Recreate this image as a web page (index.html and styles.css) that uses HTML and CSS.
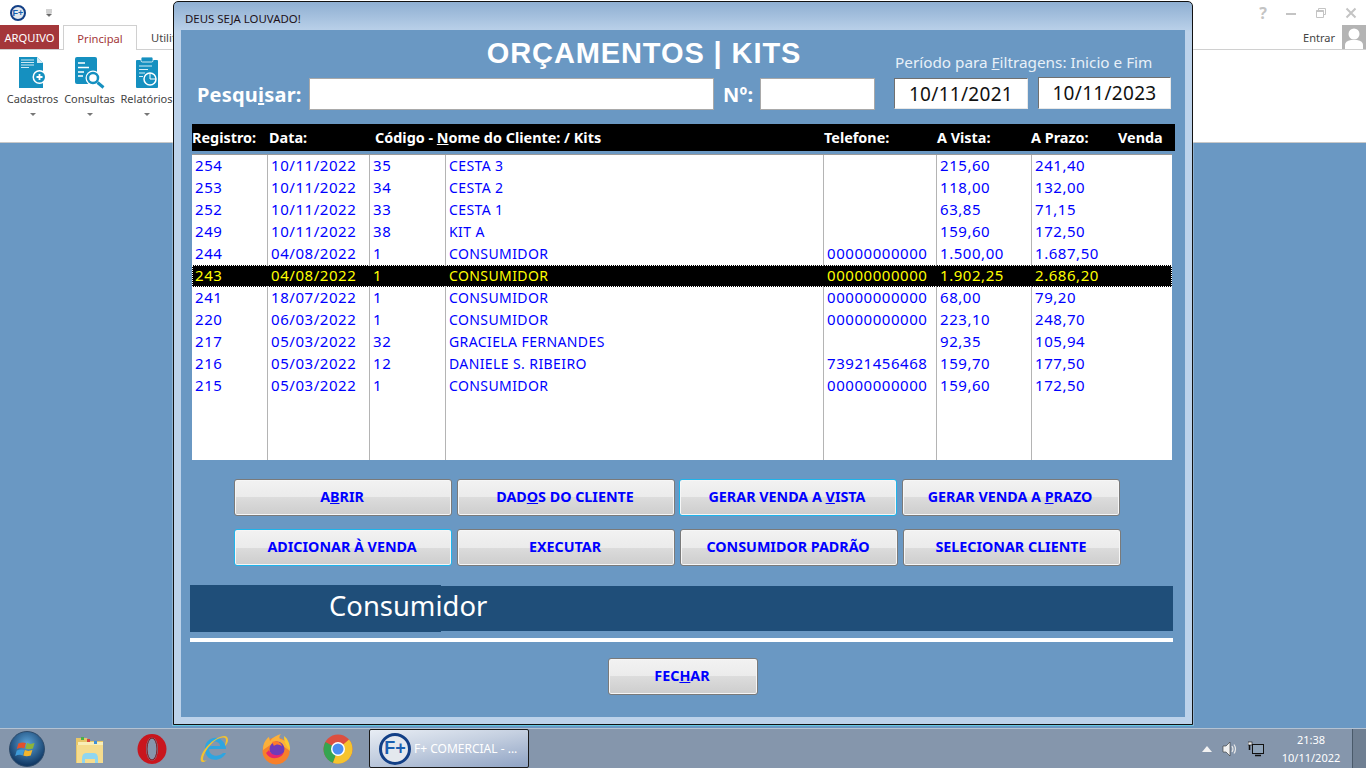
FILE: index.html
```html
<!DOCTYPE html>
<html lang="pt-BR">
<head>
    <meta charset="UTF-8">
    <title>F+ Comercial</title>
    <link rel="stylesheet" href="styles.css">
</head>
<body>
    <div class="desktop">
        <header class="ribbon">
            <div class="quick-bar">
                <span class="app-logo">F+</span>
                <svg class="quick-arrow" width="8" height="8" viewBox="0 0 8 8"><path d="M1 1h6M1 3h6M1.500 5h5L4 7.500z" fill="#666" stroke="#666" stroke-width=".6"/></svg>
                <div class="win-controls">
                    <span class="help">?</span>
                    <svg width="12" height="12" viewBox="0 0 12 12"><path d="M1 7h10" stroke="#c4c4c4" stroke-width="2"/></svg>
                    <svg width="12" height="12" viewBox="0 0 12 12"><path d="M3.500 3.500V1.500h7v6h-2M1.500 3.500h7v7h-7z" fill="none" stroke="#c4c4c4" stroke-width="1"/><path d="M1.500 4h7" stroke="#c4c4c4" stroke-width="2"/></svg>
                    <svg width="12" height="12" viewBox="0 0 12 12"><path d="M1.500 1.500l9 9M10.500 1.500l-9 9" stroke="#c4c4c4" stroke-width="2"/></svg>
                </div>
            </div>
            <div class="tabs">
                <div class="tab-file">ARQUIVO</div>
                <div class="tab-active">Principal</div>
                <div class="tab">Utilitários</div>
                <div class="account">
                    <span>Entrar</span>
                    <svg class="avatar" width="24" height="24" viewBox="0 0 24 24"><rect width="24" height="24" fill="#b4b4b4"/><circle cx="12" cy="9" r="5.500" fill="#fff"/><path d="M3 24v-4q0-4 6-5h6q6 1 6 5v4z" fill="#fff"/></svg>
                </div>
            </div>
            <div class="ribbon-tools">
                <div class="tool">
                    <svg width="30" height="33" viewBox="0 0 30 33"><path d="M1 1h18l6 6v25H1z" fill="#1590c0"/><path d="M19 1v6h6z" fill="#d5edf6"/><path d="M3 4h13M3 6.500h13M3 9h13M3 11.500h8" stroke="#cfe9f4" stroke-width="1.200"/><circle cx="21.500" cy="21" r="7" fill="#fff"/><circle cx="21.500" cy="21" r="5.500" fill="#1590c0"/><path d="M18.500 21h6M21.500 18v6" stroke="#fff" stroke-width="1.800"/></svg>
                    <span>Cadastros</span>
                    <i class="caret"></i>
                </div>
                <div class="tool">
                    <svg width="32" height="33" viewBox="0 0 32 33"><rect x="1" y="1" width="22" height="27" rx="2" fill="#1590c0"/><path d="M4 7h7M4 11.500h11M4 16h6M4 20h5" stroke="#fff" stroke-width="1.500"/><circle cx="19" cy="22" r="7.500" fill="#fff"/><circle cx="19" cy="22" r="5" fill="none" stroke="#1590c0" stroke-width="2.500"/><path d="M23.500 26.500l6 5" stroke="#1590c0" stroke-width="3"/></svg>
                    <span>Consultas</span>
                    <i class="caret"></i>
                </div>
                <div class="tool">
                    <svg width="24" height="33" viewBox="0 0 24 33"><rect x="1" y="4" width="22" height="28" rx="1" fill="#1590c0"/><rect x="6" y="1" width="12" height="5" rx="1.500" fill="#1590c0" stroke="#fff" stroke-width=".8"/><path d="M4 10h13M4 13.500h9M4 17h6M4 20.500h4" stroke="#d5edf6" stroke-width="1.200"/><circle cx="15" cy="23" r="6" fill="none" stroke="#fff" stroke-width="1.500"/><path d="M15 23v-6M15 23h6" stroke="#fff" stroke-width="1"/></svg>
                    <span>Relatórios</span>
                    <i class="caret"></i>
                </div>
            </div>
        </header>

        <div class="window">
            <div class="window-title">DEUS SEJA LOUVADO!</div>
            <main class="window-body">
                <div class="top-area">
                    <div class="top-left">
                        <h1>ORÇAMENTOS | KITS</h1>
                        <div class="search-row">
                            <label class="search-label">Pesq<span>u</span><u>i</u>sar:</label>
                            <input class="field field-search" type="text">
                            <label class="search-label num-label">Nº:</label>
                            <input class="field field-num" type="text">
                        </div>
                    </div>
                    <div class="top-right">
                        <p class="period">Período para <u>F</u>iltragens: Inicio e Fim</p>
                        <div class="dates">
                            <input class="date" type="text" value="10/11/2021">
                            <input class="date date-end" type="text" value="10/11/2023">
                        </div>
                    </div>
                </div>

                <div class="list-head">
                    <span>Registro:</span>
                    <span>Data:</span>
                    <span>Código - <u>N</u>ome do Cliente: / Kits</span>
                    <span>Telefone:</span>
                    <span>A Vista:</span>
                    <span>A Prazo:</span>
                    <span>Venda</span>
                </div>

                <table class="list">
                    <colgroup>
                        <col class="c-reg"><col class="c-date"><col class="c-code"><col class="c-name"><col class="c-tel"><col class="c-cash"><col>
                    </colgroup>
                    <tr><td>254</td><td>10/11/2022</td><td>35</td><td>CESTA 3</td><td></td><td>215,60</td><td>241,40</td></tr>
                    <tr><td>253</td><td>10/11/2022</td><td>34</td><td>CESTA 2</td><td></td><td>118,00</td><td>132,00</td></tr>
                    <tr><td>252</td><td>10/11/2022</td><td>33</td><td>CESTA 1</td><td></td><td>63,85</td><td>71,15</td></tr>
                    <tr><td>249</td><td>10/11/2022</td><td>38</td><td>KIT A</td><td></td><td>159,60</td><td>172,50</td></tr>
                    <tr><td>244</td><td>04/08/2022</td><td>1</td><td>CONSUMIDOR</td><td>00000000000</td><td>1.500,00</td><td>1.687,50</td></tr>
                    <tr class="selected"><td>243</td><td>04/08/2022</td><td>1</td><td>CONSUMIDOR</td><td>00000000000</td><td>1.902,25</td><td>2.686,20</td></tr>
                    <tr><td>241</td><td>18/07/2022</td><td>1</td><td>CONSUMIDOR</td><td>00000000000</td><td>68,00</td><td>79,20</td></tr>
                    <tr><td>220</td><td>06/03/2022</td><td>1</td><td>CONSUMIDOR</td><td>00000000000</td><td>223,10</td><td>248,70</td></tr>
                    <tr><td>217</td><td>05/03/2022</td><td>32</td><td>GRACIELA FERNANDES</td><td></td><td>92,35</td><td>105,94</td></tr>
                    <tr><td>216</td><td>05/03/2022</td><td>12</td><td>DANIELE S. RIBEIRO</td><td>73921456468</td><td>159,70</td><td>177,50</td></tr>
                    <tr><td>215</td><td>05/03/2022</td><td>1</td><td>CONSUMIDOR</td><td>00000000000</td><td>159,60</td><td>172,50</td></tr>
                    <tr class="filler"><td></td><td></td><td></td><td></td><td></td><td></td><td></td></tr>
                </table>

                <div class="actions actions-first">
                    <button class="btn">A<u>B</u>RIR</button>
                    <button class="btn">DAD<u>O</u>S DO CLIENTE</button>
                    <button class="btn btn-focus btn-nudge">GERAR VENDA A <u>V</u>ISTA</button>
                    <button class="btn">GERAR VENDA A <u>P</u>RAZO</button>
                </div>
                <div class="actions">
                    <button class="btn btn-focus">ADICIONAR À VENDA</button>
                    <button class="btn">EXECUTAR</button>
                    <button class="btn">CONSUMIDOR PADRÃO</button>
                    <button class="btn">SELECIONAR CLIENTE</button>
                </div>

                <div class="client-band">
                    <div class="client-name">Consumidor</div>
                </div>
                <div class="rule"></div>
                <div class="close-row">
                    <button class="btn btn-close">FEC<u>H</u>AR</button>
                </div>
            </main>
        </div>

        <footer class="taskbar">
            <div class="start-orb">
                <svg width="28" height="28" viewBox="0 0 26 26"><path d="M5 8q4-2 7-.500l-1.500 5q-3-1.500-7 .500z" fill="#e2502b"/><path d="M13 7.500q3 1.500 7 0l-1.500 5q-4 1.500-7 0z" fill="#8cb43a"/><path d="M3.500 14.500q4-2 7-.500l-1.500 5q-3-1.500-7 .500z" fill="#3f9bd8"/><path d="M11 14q3 1.500 7 0l-1.500 5q-4 1.500-7 0z" fill="#f3b52c"/></svg>
            </div>
            <div class="task-icon">
                <svg width="32" height="32" viewBox="0 0 32 32"><path d="M2 5h11l2 3h14v22H2z" fill="#e8c768"/><path d="M4 9h25v4H4z" fill="#f9eeb8"/><path d="M3 12h26v18H3z" fill="#f5dc8e"/><path d="M7 4h3v3H7z" fill="#4bb04a"/><path d="M13 6h3v3h-3z" fill="#d9443a"/><path d="M20 8h3v3h-3z" fill="#3f8fd8"/><path d="M8 26q0-6 4-6h8q4 0 4 6v4h-3v-4H11v4H8z" fill="#8fd6f0"/></svg>
            </div>
            <div class="task-icon">
                <svg width="32" height="32" viewBox="0 0 32 32"><ellipse cx="16" cy="16" rx="14.500" ry="15" fill="#c9161e"/><ellipse cx="16" cy="16" rx="6" ry="11.500" fill="#8696ac"/><ellipse cx="16" cy="16" rx="5" ry="11" fill="none" stroke="#7e1216" stroke-width="1"/></svg>
            </div>
            <div class="task-icon">
                <svg width="32" height="32" viewBox="0 0 32 32"><path d="M28 16H11c0 7 9 9 14 4h3c-4 9-20 10-21-3-1-9 8-15 15-11 3 2 6 5 6 10z" fill="#2ea5e0"/><path d="M11 13h11c0-6-10-6-11 0z" fill="#8696ac"/><path d="M3 28C1 22 11 8 22 4c5-2 8-1 8 3 0 2-1 4-3 6 0-2 1-4 1-6 0-3-3-3-6-2C13 8 5 21 5 26c0 2 2 2 4 1-2 2-5 3-6 1z" fill="#f2c230"/></svg>
            </div>
            <div class="task-icon">
                <svg width="32" height="32" viewBox="0 0 32 32"><circle cx="16" cy="18" r="13.500" fill="#f7802a"/><path d="M3 17C3 10 6 6 9 4l1 4c3-4 7-6 11-7-2 2-2 4-1 5 6 1 10 6 10 12L16 8z" fill="#fbb03b"/><path d="M24 3c4 3 6 8 6 14-3-3-6-7-6-14z" fill="#fdc92f"/><circle cx="17" cy="16" r="7.500" fill="#6e3bb8"/><path d="M9 17c2 6 10 7 15 2-2 7-14 9-18 1z" fill="#e8286a"/><path d="M12 9c4-2 9 0 10 4-3-2-6-2-8 0z" fill="#ff7b28"/></svg>
            </div>
            <div class="task-icon">
                <svg width="30" height="30" viewBox="0 0 30 30"><circle cx="15" cy="15" r="14.500" fill="#dd4f3f"/><path d="M15 15L2.500 8A14.500 14.500 0 0 0 10 28.800z" fill="#35a550"/><path d="M15 15L10 28.800A14.500 14.500 0 0 0 29.500 15 14.500 14.500 0 0 0 26 5.500z" fill="#f6c42d"/><path d="M15 8.500h13.500l-6 0z" fill="#dd4f3f"/><circle cx="15" cy="15" r="7" fill="#fff"/><circle cx="15" cy="15" r="5.500" fill="#4b8ef0"/></svg>
            </div>
            <div class="task-active">
                <span class="app-logo app-logo-big">F+</span>
                <span class="task-label">F+ COMERCIAL - ...</span>
            </div>
            <div class="tray">
                <svg width="10" height="6" viewBox="0 0 10 6"><path d="M5 0l5 6H0z" fill="#f2f2f2"/></svg>
                <svg width="16" height="16" viewBox="0 0 16 16"><path d="M1 5h3l4-4v14l-4-4H1z" fill="#f0f0f0" stroke="#333" stroke-width=".6"/><path d="M10 5q2 3 0 6M12 3.500q3 4.500 0 9" fill="none" stroke="#e8e8e8" stroke-width="1.200"/></svg>
                <svg width="16" height="16" viewBox="0 0 16 16"><rect x="4.500" y="3.500" width="11" height="9" fill="#8fa3b8" stroke="#111"/><path d="M7 14.500h6M1.500 1v8" stroke="#111" stroke-width="1.500"/><rect x="0" y="1" width="4" height="3" fill="#eee" stroke="#111" stroke-width=".6"/></svg>
                <div class="clock">
                    <span>21:38</span>
                    <span>10/11/2022</span>
                </div>
            </div>
            <div class="show-desktop"></div>
        </footer>
    </div>
</body>
</html>
```

FILE: styles.css
```css
* {
    margin: 0;
    padding: 0;
    box-sizing: border-box;
}
body {
    font-family: 'Noto Sans', sans-serif;
    overflow: hidden;
}
.desktop {
    width: 1366px;
    height: 768px;
    background-color: #6a98c3;
    position: relative;
    display: flex;
    flex-direction: column;
    justify-content: space-between;
}

/* ribbon behind the window */
.ribbon {
    height: 143px;
    background-color: #fff;
    border-bottom: 1px solid #c8c8c8;
}
.quick-bar {
    height: 25px;
    display: flex;
    align-items: center;
    padding-left: 10px;
}
.app-logo {
    width: 16px;
    height: 16px;
    border-radius: 50%;
    border: 2px solid #123f86;
    background-color: #e4e8ee;
    color: #1a5fb0;
    font-family: 'Liberation Sans', sans-serif;
    font-weight: bold;
    font-size: 9px;
    display: flex;
    align-items: center;
    justify-content: center;
}
.quick-arrow {
    margin-left: 19px;
}
.win-controls {
    margin-left: auto;
    display: flex;
    align-items: center;
    gap: 18px;
    padding-right: 9px;
}
.help {
    color: #c4c4c4;
    font-weight: bold;
    font-size: 16px;
    line-height: 12px;
}
.tabs {
    height: 25px;
    display: flex;
    border-bottom: 1px solid #d0d0d0;
    font-size: 11.200px;
}
.tab-file {
    width: 59px;
    background-color: #a4373a;
    color: #fff;
    line-height: 25px;
    text-align: center;
}
.tab-active {
    width: 74px;
    height: 25px;
    margin-left: 4px;
    border: 1px solid #d0d0d0;
    border-bottom: none;
    background-color: #fff;
    color: #a4373a;
    line-height: 25px;
    text-align: center;
}
.tab {
    margin-left: 14px;
    color: #444;
    line-height: 25px;
}
.account {
    margin-left: auto;
    display: flex;
    align-items: center;
    gap: 7px;
    color: #444;
    font-size: 11px;
}
.ribbon-tools {
    display: flex;
    padding: 6px 0 0 4px;
}
.tool {
    width: 57px;
    display: flex;
    flex-direction: column;
    align-items: center;
    font-size: 11px;
    color: #444;
}
.tool span {
    margin-top: 1px;
    line-height: 18px;
    white-space: nowrap;
}
.caret {
    margin-top: 5px;
    border-left: 3px solid transparent;
    border-right: 3px solid transparent;
    border-top: 3px solid #777;
}

/* modal window */
.window {
    position: absolute;
    left: 173px;
    top: 1px;
    width: 1020px;
    height: 724px;
    border: 1px solid #111;
    border-radius: 5px 5px 0 0;
    outline: 1px solid rgba(255, 255, 255, 0.25);
    box-shadow: 0 1px 0 #2fb3d8;
    background: linear-gradient(180deg, #8fafd2 0, #bcd2ea 30px, #bcd2ea 100%);
    padding: 0 7px 7px 7px;
    display: flex;
    flex-direction: column;
}
.window-title {
    height: 28px;
    line-height: 33px;
    padding-left: 4px;
    font-size: 11.400px;
    color: #201018;
}
.window-body {
    flex-grow: 1;
    background-color: #6a98c3;
    padding: 0 9px;
}
.top-area {
    height: 94px;
    display: flex;
}
.top-left {
    width: 703px;
}
h1 {
    height: 48px;
    line-height: 47px;
    padding-left: 205px;
    text-align: center;
    font-family: 'Liberation Sans', sans-serif;
    font-size: 29px;
    letter-spacing: 0.9px;
    color: #fff;
    white-space: nowrap;
}
.search-row {
    display: flex;
    align-items: center;
}
.search-label {
    padding-left: 7px;
    width: 119px;
    font-size: 20px;
    font-weight: bold;
    color: #fff;
    letter-spacing: 0.2px;
}
.num-label {
    width: 46px;
    padding-left: 9px;
}
.field {
    height: 32px;
    background-color: #fff;
    border: 1px solid #a9a9a9;
}
.field-search {
    width: 405px;
}
.field-num {
    width: 115px;
}
.top-right {
    padding-left: 1px;
}
.period {
    height: 47px;
    padding: 22px 0 0 1px;
    line-height: 20px;
    font-size: 15.300px;
    color: #e8f0f8;
    white-space: nowrap;
}
.dates {
    display: flex;
    gap: 10px;
    align-items: flex-end;
}
.date {
    width: 134px;
    height: 31px;
    border: 1px solid;
    border-color: #707070 #e8e8e8 #e8e8e8 #707070;
    background-color: #fff;
    text-align: center;
    font-family: 'Noto Sans', sans-serif;
    font-size: 19px;
    letter-spacing: 0.3px;
    color: #111;
}
.date-end {
    width: 133px;
    height: 32px;
}

.list-head {
    height: 27px;
    margin-left: 2px;
    width: 983px;
    background-color: #000;
    color: #fff;
    font-size: 14.400px;
    font-weight: bold;
    line-height: 28px;
    display: grid;
    grid-template-columns: 77px 106px 449px 113px 94px 87px 1fr;
    white-space: nowrap;
}
.list {
    width: 980px;
    height: 306px;
    margin: 3px 0 0 2px;
    border-collapse: separate;
    border-spacing: 0;
    table-layout: fixed;
    background-color: #fff;
    border-top: 1px solid #999;
    font-size: 15px;
    line-height: 18px;
    letter-spacing: 0.550px;
    color: #0000ff;
}
.c-reg { width: 75px; }
.c-date { width: 102px; }
.c-code { width: 76px; }
.c-name { width: 378px; }
.c-tel { width: 113px; }
.c-cash { width: 95px; }
.list td {
    height: 22px;
    padding: 0 0 2px 3px;
    border-left: 1px solid #b4b4b4;
    white-space: nowrap;
    overflow: hidden;
}
.list td:first-child {
    border-left: none;
}
.list td:nth-child(4) {
    padding: 1px 0 1px 3px;
    font-size: 14px;
    letter-spacing: 0.400px;
}
.list .selected td {
    background-color: #000;
    color: #ffff00;
    border-left-color: #000;
    border-top: 1px dotted #fff;
    border-bottom: 1px dotted #fff;
}
.list .selected td:first-child {
    border-left: 1px dotted #fff;
    padding-left: 2px;
}
.list .selected td:last-child {
    border-right: 1px dotted #fff;
}
.list .filler td {
    height: auto;
}

.actions {
    margin: 13px 0 0 44px;
    display: flex;
    gap: 5px;
}
.actions-first {
    margin-top: 19px;
}
.btn {
    width: 218px;
    height: 37px;
    padding: 0 2px 3px 0;
    border: 1px solid #7a7a7a;
    border-radius: 3px;
    background: linear-gradient(180deg, #f2f2f2 0, #ebebeb 50%, #dcdcdc 50%, #cdcdcd 100%);
    box-shadow: inset 0 0 0 1px #f6f6f6;
    color: #0000ff;
    font-family: 'Noto Sans', sans-serif;
    font-weight: bold;
    font-size: 14.300px;
}
.btn-focus {
    border-color: #1fb4ea;
}
.btn-nudge {
    margin-left: -1px;
}
.client-band {
    height: 45px;
    margin-top: 20px;
    width: 983px;
    background-color: #1f4e79;
}
.client-name {
    width: 251px;
    height: 47px;
    position: relative;
    top: -1px;
    background-color: #1f4e79;
    color: #fff;
    font-size: 27.400px;
    line-height: 42px;
    padding-left: 139px;
    white-space: nowrap;
}
.rule {
    height: 4px;
    width: 983px;
    margin-top: 7px;
    background-color: #fff;
}
.close-row {
    margin: 16px 0 0 418px;
}
.btn-close {
    width: 150px;
}

/* taskbar */
.taskbar {
    height: 40px;
    background-color: #8596ac;
    border-top: 1px solid #b4c2d2;
    display: flex;
    align-items: center;
    position: relative;
}
.start-orb {
    width: 36px;
    height: 36px;
    margin-left: 9px;
    border-radius: 50%;
    background: radial-gradient(circle at 50% 35%, #5ba3d8, #123a66 75%);
    border: 1px solid #2c4a6a;
    display: flex;
    align-items: center;
    justify-content: center;
}
.task-icon {
    width: 62px;
    display: flex;
    justify-content: center;
}
.start-orb + .task-icon {
    margin-left: 14px;
}
.task-active {
    width: 160px;
    height: 39px;
    border: 1px solid #1a1a1a;
    border-radius: 2px;
    background: linear-gradient(170deg, #e8edf4 0, #c4cfe0 45%, #8fa3c4 100%);
    display: flex;
    align-items: center;
    gap: 3px;
    padding-left: 9px;
}
.app-logo-big {
    width: 32px;
    height: 32px;
    border-width: 3px;
    font-size: 18px;
}
.task-label {
    font-size: 12px;
    color: #fff;
    white-space: nowrap;
}
.tray {
    margin-left: auto;
    display: flex;
    align-items: center;
    gap: 10px;
    margin-right: 6px;
}
.clock {
    width: 70px;
    margin-left: 2px;
    display: flex;
    flex-direction: column;
    align-items: center;
    font-size: 11px;
    line-height: 18px;
    color: #fff;
}
.show-desktop {
    width: 14px;
    height: 39px;
    background-color: #6f7f92;
    border-left: 1px solid #4a5a6a;
}
```
